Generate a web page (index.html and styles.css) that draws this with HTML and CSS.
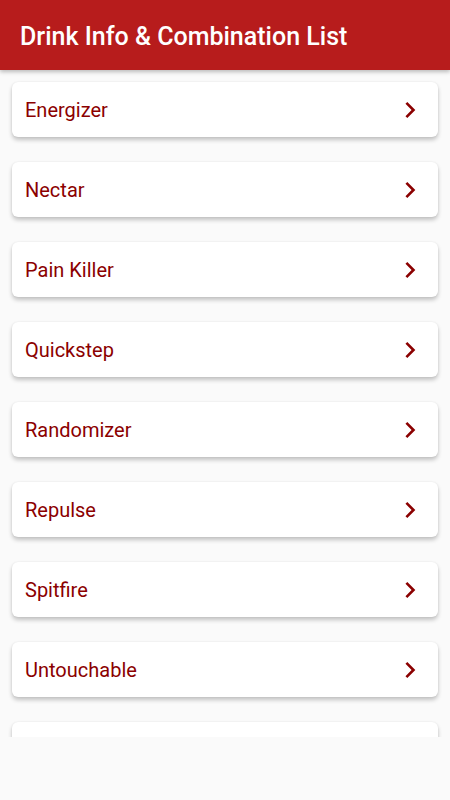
FILE: index.html
```html
<!DOCTYPE html>
<html lang="en">
<head>
<meta charset="UTF-8">
<meta name="viewport" content="width=device-width, initial-scale=1.0">
<title>Drink Info &amp; Combination List</title>
<link rel="stylesheet" href="styles.css">
</head>
<body>

<header class="app-bar">
    <h1>Drink Info &amp; Combination List</h1>
</header>

<div class="list">
    <div class="card"><span>Energizer</span><svg class="chevron" viewBox="0 0 24 24"><path d="M8.6 16.6 13.2 12 8.6 7.4 10 6l6 6-6 6z"/></svg></div>
    <div class="card"><span>Nectar</span><svg class="chevron" viewBox="0 0 24 24"><path d="M8.6 16.6 13.2 12 8.6 7.4 10 6l6 6-6 6z"/></svg></div>
    <div class="card"><span>Pain Killer</span><svg class="chevron" viewBox="0 0 24 24"><path d="M8.6 16.6 13.2 12 8.6 7.4 10 6l6 6-6 6z"/></svg></div>
    <div class="card"><span>Quickstep</span><svg class="chevron" viewBox="0 0 24 24"><path d="M8.6 16.6 13.2 12 8.6 7.4 10 6l6 6-6 6z"/></svg></div>
    <div class="card"><span>Randomizer</span><svg class="chevron" viewBox="0 0 24 24"><path d="M8.6 16.6 13.2 12 8.6 7.4 10 6l6 6-6 6z"/></svg></div>
    <div class="card"><span>Repulse</span><svg class="chevron" viewBox="0 0 24 24"><path d="M8.6 16.6 13.2 12 8.6 7.4 10 6l6 6-6 6z"/></svg></div>
    <div class="card"><span>Spitfire</span><svg class="chevron" viewBox="0 0 24 24"><path d="M8.6 16.6 13.2 12 8.6 7.4 10 6l6 6-6 6z"/></svg></div>
    <div class="card"><span>Untouchable</span><svg class="chevron" viewBox="0 0 24 24"><path d="M8.6 16.6 13.2 12 8.6 7.4 10 6l6 6-6 6z"/></svg></div>
    <div class="card"></div> <!-- cut off by the end of the list -->
</div>

</body>
</html>
```

FILE: styles.css
```css
body {
    margin: 0;
    background-color: #fafafa;
    font-family: Roboto, "Liberation Sans", sans-serif;
}

.app-bar {
    position: relative;
    z-index: 1;
    height: 70px;
    background-color: #b71c1c;
    display: flex;
    align-items: center;
    padding: 2px 20px 0;
    box-sizing: border-box;
    box-shadow: 0 2px 4px rgba(0, 0, 0, 0.25);
}

.app-bar h1 {
    margin: 0;
    font-size: 25px;
    font-weight: 500;
    color: #fff;
}

.list {
    height: 655px;
    overflow: hidden;
    padding: 12px 12px 0;
}

.card {
    height: 55px;
    margin-bottom: 25px;
    padding: 1px 12px 0 13px;
    box-sizing: border-box;
    background-color: #fff;
    border-radius: 6px;
    box-shadow: 0 3px 4px rgba(0, 0, 0, 0.22), 0 0 2px rgba(0, 0, 0, 0.08);
    display: flex;
    align-items: center;
    justify-content: space-between;
    font-size: 20px;
    color: #8b0000;
}

.chevron {
    width: 32px;
    height: 32px;
    fill: #8b0000;
}
```
